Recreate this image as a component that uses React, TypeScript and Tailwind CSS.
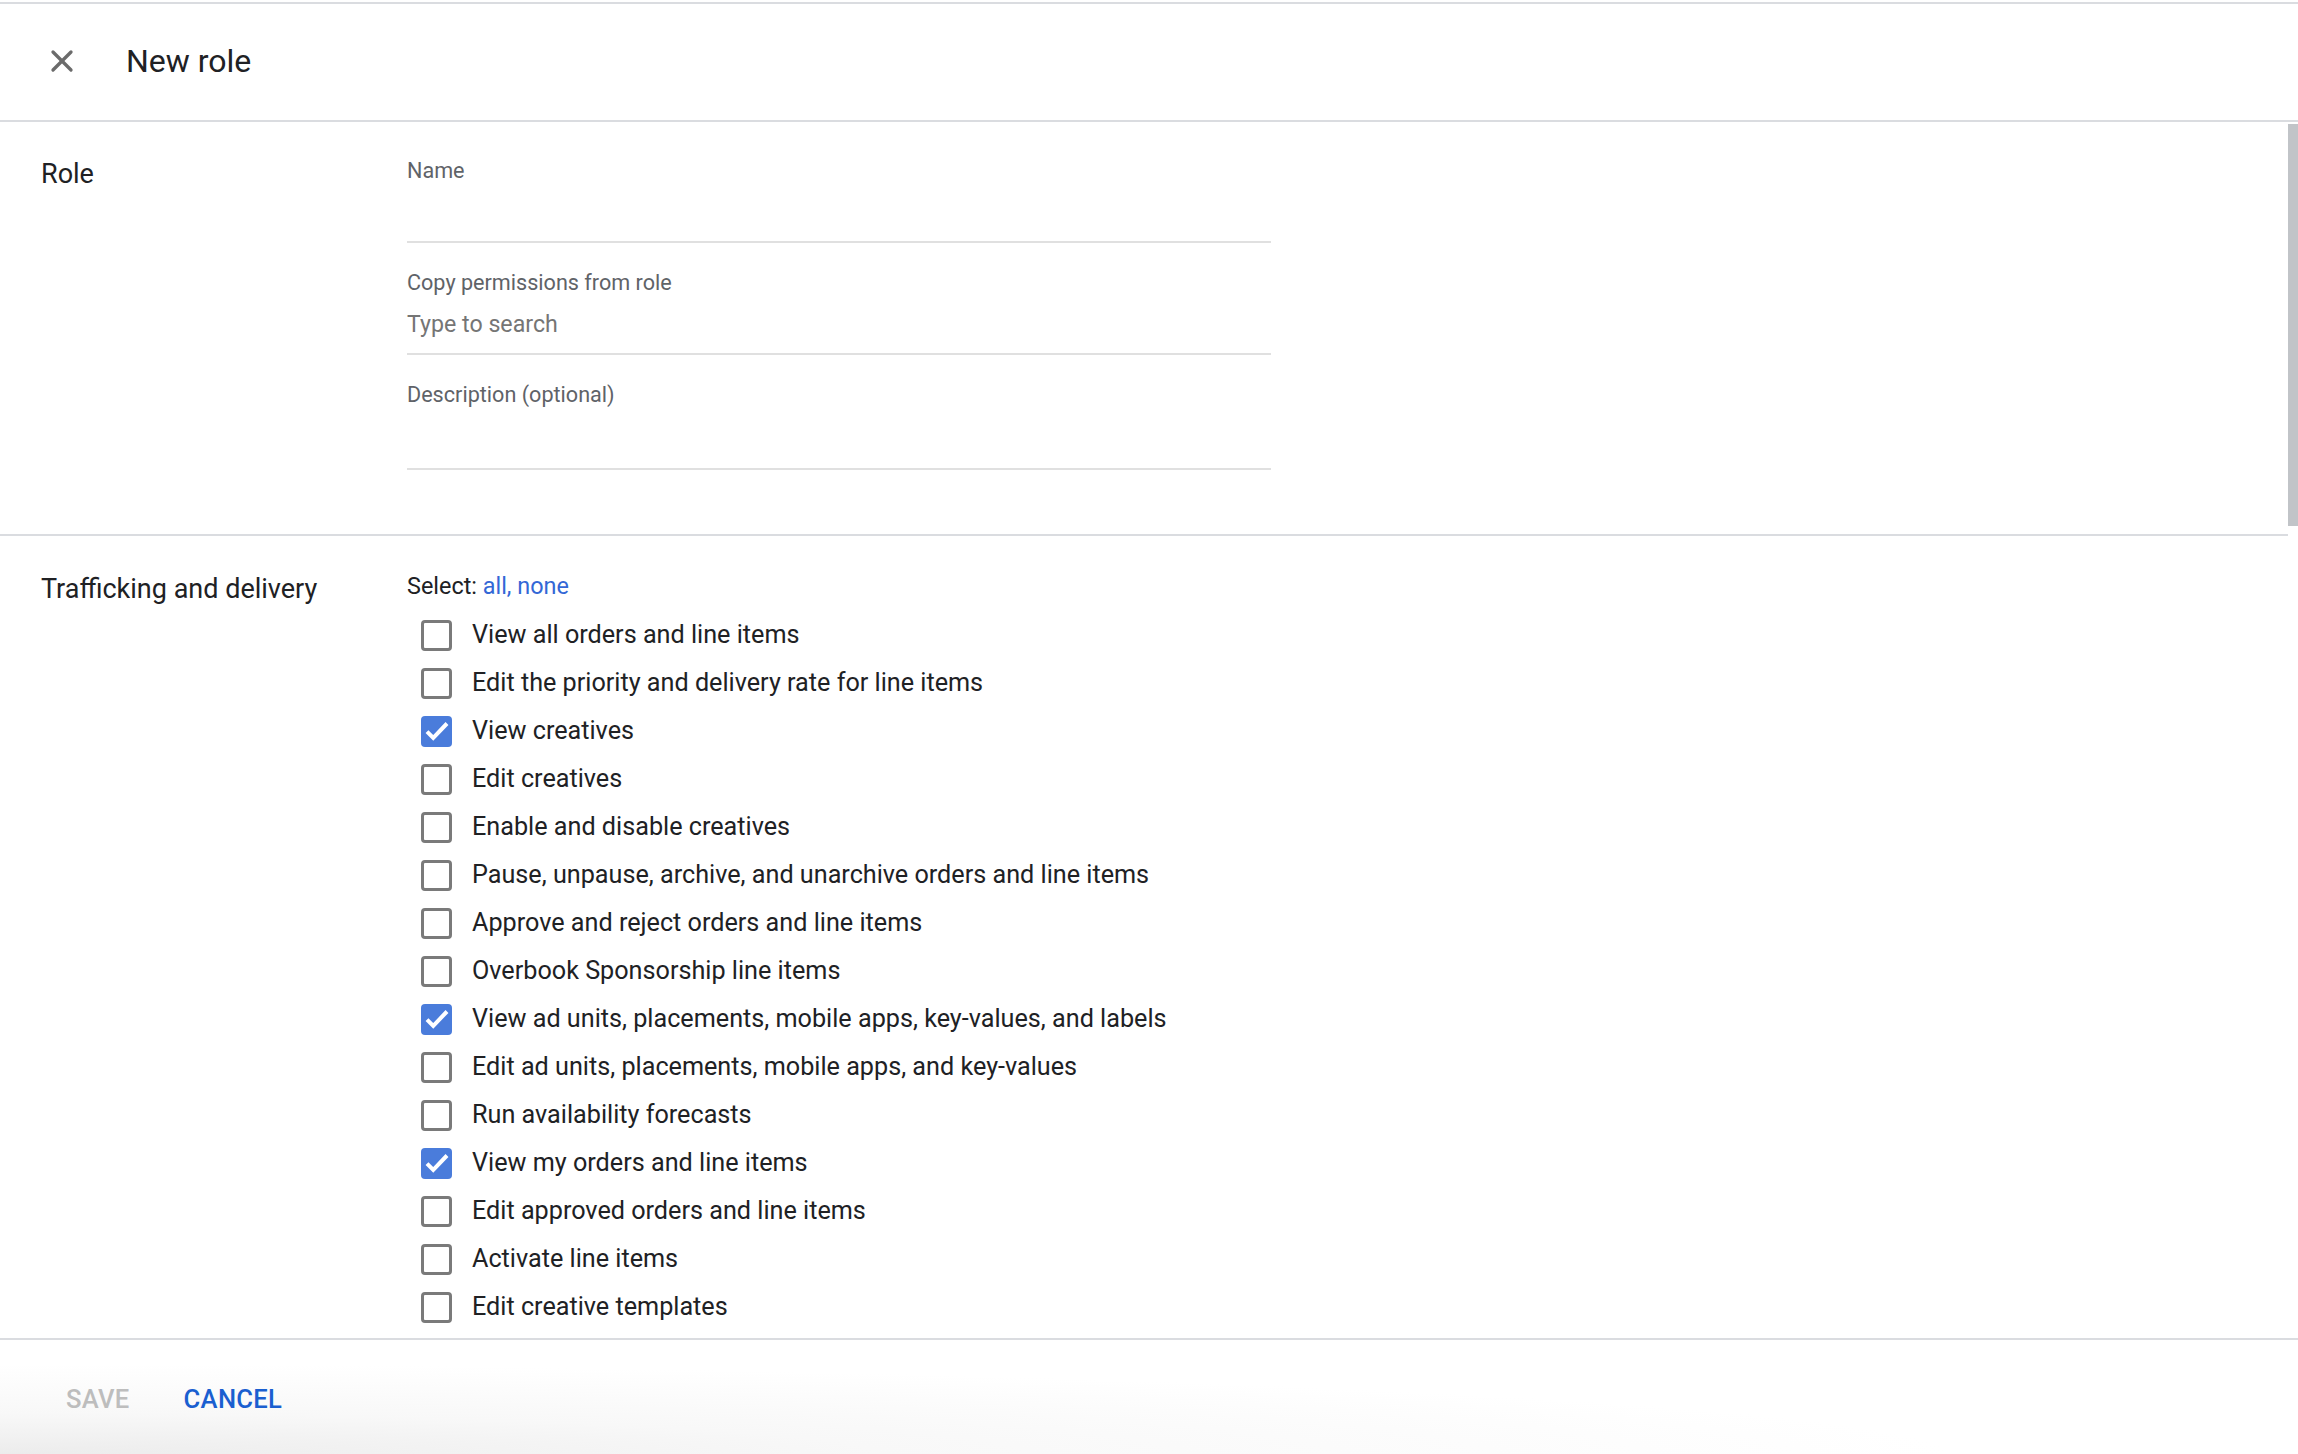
import { X } from 'lucide-react';

const permissions: { label: string; checked: boolean }[] = [
  { label: 'View all orders and line items', checked: false },
  { label: 'Edit the priority and delivery rate for line items', checked: false },
  { label: 'View creatives', checked: true },
  { label: 'Edit creatives', checked: false },
  { label: 'Enable and disable creatives', checked: false },
  { label: 'Pause, unpause, archive, and unarchive orders and line items', checked: false },
  { label: 'Approve and reject orders and line items', checked: false },
  { label: 'Overbook Sponsorship line items', checked: false },
  { label: 'View ad units, placements, mobile apps, key-values, and labels', checked: true },
  { label: 'Edit ad units, placements, mobile apps, and key-values', checked: false },
  { label: 'Run availability forecasts', checked: false },
  { label: 'View my orders and line items', checked: true },
  { label: 'Edit approved orders and line items', checked: false },
  { label: 'Activate line items', checked: false },
  { label: 'Edit creative templates', checked: false },
];

function Checkbox({ checked }: { checked: boolean }) {
  if (checked) {
    return (
      <span className="flex h-[31px] w-[31px] flex-shrink-0 items-center justify-center rounded-[4px] bg-[#4a7cdb]">
        <svg viewBox="0 0 24 24" className="h-[30px] w-[30px]" fill="none" stroke="white" strokeWidth="3.2">
          <path d="M4 12.5l5 5L20 6" />
        </svg>
      </span>
    );
  }
  return <span className="h-[31px] w-[31px] flex-shrink-0 rounded-[4px] border-[3px] border-[#7a7a7a] bg-white" />;
}

function Field({ label, placeholder, tall }: { label: string; placeholder?: string; tall?: boolean }) {
  return (
    <div className="flex w-[864px] flex-col border-b-2 border-[#e0e0e0]">
      <label className="h-[26px] text-[21.6px] leading-[26px] text-[#5f6368]">{label}</label>
      <div className={tall ? 'flex h-[60px] items-center text-[23.2px] text-[#757575]' : 'flex h-[57px] items-center text-[23.2px] text-[#757575]'}>
        {placeholder}
      </div>
    </div>
  );
}

export default function App() {
  return (
    <div className="flex h-[1454px] w-full flex-col overflow-hidden bg-white pt-[2px] font-['Roboto',sans-serif] text-[#202124]">
      {/* header */}
      <div className="flex h-[120px] flex-shrink-0 items-center border-y-2 border-[#dadce0] pb-[2px] pl-[44px]">
        <X className="h-[36px] w-[36px] text-[#6b6b6b]" strokeWidth={2.2} />
        <h1 className="ml-[46px] text-[32px] font-normal">New role</h1>
      </div>

      <div className="flex min-h-0 flex-1">
        <div className="min-w-0 flex-1 overflow-hidden">
          {/* Role */}
          <section className="flex border-b-2 border-[#dadce0] pb-[64px] pt-[32px]">
            <h2 className="w-[407px] flex-shrink-0 pl-[41px] text-[27px] leading-[40px]">Role</h2>
            <div className="flex flex-col gap-[27px] pt-[4px]">
              <Field label="Name" />
              <Field label="Copy permissions from role" placeholder="Type to search" />
              <Field label="Description (optional)" tall />
            </div>
          </section>

          {/* Trafficking and delivery */}
          <section className="flex pt-[33px]">
            <h2 className="w-[407px] flex-shrink-0 pl-[41px] text-[27px] leading-[40px]">Trafficking and delivery</h2>
            <div className="flex flex-col">
              <div className="h-[34px] text-[23.4px] leading-[34px]">
                Select: <span className="text-[#3367d6]">all, none</span>
              </div>
              <ul className="mt-[8px] flex flex-col pl-[14px]">
                {permissions.map((p) => (
                  <li key={p.label} className="flex h-[48px] items-center gap-[20px] text-[25.2px]">
                    <Checkbox checked={p.checked} />
                    <span>{p.label}</span>
                  </li>
                ))}
              </ul>
            </div>
          </section>
        </div>

        {/* scrollbar */}
        <div className="w-[10px] flex-shrink-0 pt-[2px]">
          <div className="h-[402px] bg-[#c1c4c8]" />
        </div>
      </div>

      {/* footer */}
      <div className="flex h-[116px] flex-shrink-0 items-center gap-[54px] border-t-2 border-[#dadce0] bg-[radial-gradient(ellipse_1950px_90px_at_0%_100%,#ececec,#f8f8f8_45%,#ffffff_100%)] pl-[66px] pt-[4px] text-[25.6px] font-medium tracking-[0.3px]">
        <button className="text-[#bdbdbd]">SAVE</button>
        <button className="text-[#1a5fd0]">CANCEL</button>
      </div>
    </div>
  );
}
